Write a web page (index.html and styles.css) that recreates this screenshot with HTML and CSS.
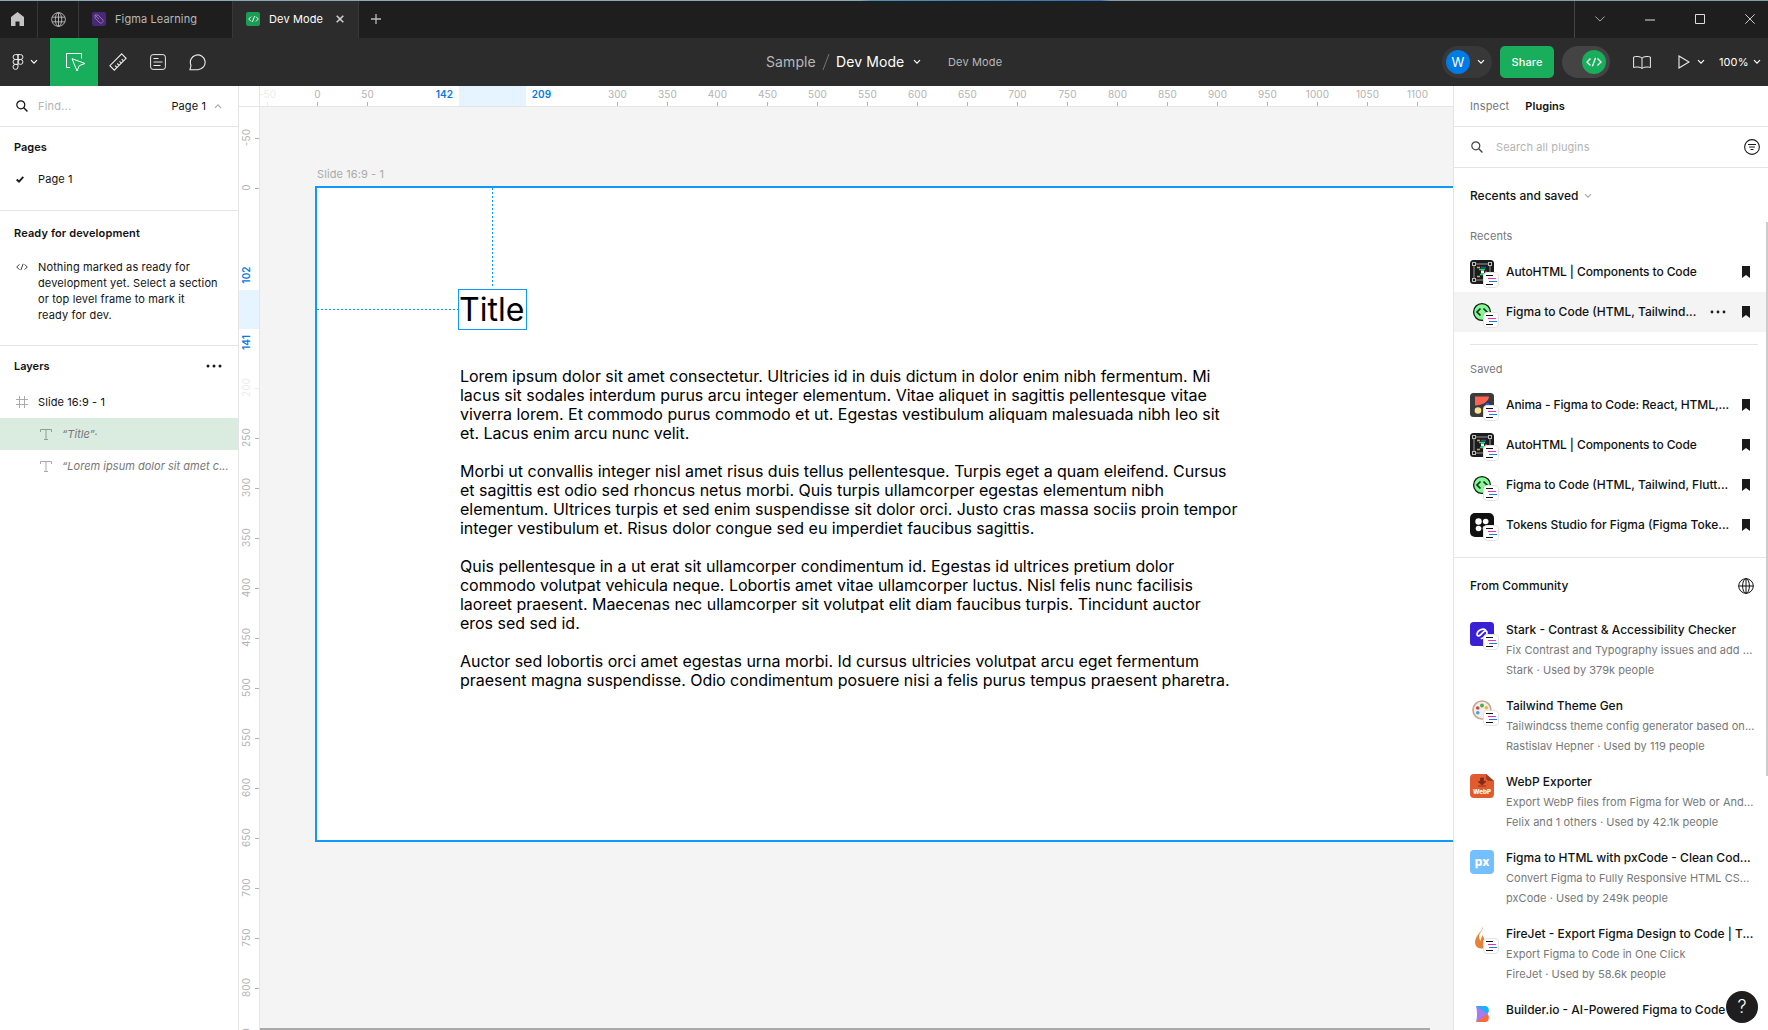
FILE: index.html
```html
<!DOCTYPE html>
<html lang="en">
<head>
<meta charset="utf-8">
<title>Dev Mode</title>
<link rel="stylesheet" href="styles.css">
</head>
<body>
<svg class="defs" width="0" height="0">
  <defs>
    <symbol id="down" viewBox="0 0 8 6"><path d="M1 1.2 4 4.2 7 1.2" fill="none" stroke="currentColor" stroke-width="1.2"/></symbol>
    <symbol id="search" viewBox="0 0 12 12"><circle cx="4.8" cy="4.8" r="4" fill="none" stroke="currentColor" stroke-width="1.2"/><path d="M7.8 7.8 11.4 11.4" stroke="currentColor" stroke-width="1.4"/></symbol>
    <symbol id="globe" viewBox="0 0 16 16"><g fill="none" stroke="currentColor"><circle cx="8" cy="8" r="7.3"/><ellipse cx="8" cy="8" rx="3.4" ry="7.3"/><path d="M1.3 5.5h13.4M1.3 10.5h13.4M8 .7v14.6"/></g></symbol>
    <symbol id="globe2" viewBox="0 0 16 16"><g fill="none" stroke="currentColor"><circle cx="8" cy="8" r="7.3"/><ellipse cx="8" cy="8" rx="3.4" ry="7.3"/><path d="M.7 8h14.6M8 .7v14.6"/></g></symbol>
    <symbol id="code" viewBox="0 0 16 10"><path d="M4.5 1.5 1 5l3.500 3.500M11.500 1.500 15 5l-3.500 3.500M9.600 .8 6.400 9.200" fill="none" stroke="currentColor" stroke-width="1.300"/></symbol>
    <symbol id="mark" viewBox="0 0 8 12"><path d="M0 0h8v12L4 9 0 12z" fill="#1a1a1a"/></symbol>
    <symbol id="badge" viewBox="0 0 16 16"><rect x=".5" y=".5" width="15" height="15" rx="3.500" fill="#fff" stroke="#e3e3e3"/><path d="M3 3.500h7M3 12.500h7" stroke="#111"/><path d="M5 6.500h8" stroke="#ff24bd"/><path d="M6 9.500h8" stroke="#0d7ff2"/></symbol>
    <symbol id="tt" viewBox="0 0 12 11"><path d="M.5 3V.5h11V3M6 .5v10M4 10.500h4" fill="none" stroke="currentColor"/></symbol>
    <symbol id="auto" viewBox="0 0 24 24"><rect width="24" height="24" rx="3.500" fill="#1c1c1e"/><rect x="4" y="4" width="16" height="16" fill="none" stroke="#999"/><g fill="#1c1c1e" stroke="#bbb"><rect x="2.500" y="2.500" width="3" height="3"/><rect x="18.500" y="2.500" width="3" height="3"/><rect x="2.500" y="18.500" width="3" height="3"/></g><path d="M7 7.500h3" stroke="#ff9d1c" stroke-width="1.600"/><path d="M11 7.500h5" stroke="#1d58a0" stroke-width="1.600"/><path d="M9 9.500h6M10 14.500h5" stroke="#1fd683" stroke-width="1.600"/><path d="M11 10.500h3v3h-3z" fill="#d6ffed"/><path d="M15 12h2" stroke="#f33" stroke-width="1.500"/><path d="M7 16.500h3" stroke="#ff9d1c" stroke-width="1.500"/></symbol>
    <symbol id="ftc" viewBox="0 0 24 24"><circle cx="12" cy="12" r="8.400" fill="#86f794" stroke="#0c1d10" stroke-width="1.300"/><path d="M10.500 8.500 7 12l3.500 3.500M13.500 8.500 17 12l-3.500 3.500" fill="none" stroke="#10351a" stroke-width="1.700"/></symbol>
  </defs>
</svg>
<div class="app">
  <header class="tabs">
    <div class="tab home"><svg width="13" height="14" viewBox="0 0 13 14"><path d="M6.500 0 13 5v9H8.500V9.500h-4V14H0V5z" fill="#c4c4c4"/></svg></div>
    <div class="tab world"><svg width="15" height="15"><use href="#globe"/></svg></div>
    <div class="tab learn">
      <svg width="14" height="14" viewBox="0 0 14 14"><rect width="14" height="14" rx="2" fill="#4a2878"/><path d="M3 3h3l5 5c1 1.500-1.500 4-3 3L3 6zM3 3l4 4" fill="none" stroke="#8d75a8"/></svg>
      <span>Figma Learning</span></div>
    <div class="tab current">
      <span class="devicon"><svg width="11" height="8"><use href="#code"/></svg></span><span>Dev Mode</span>
      <svg class="close" width="8" height="8" viewBox="0 0 8 8"><path d="M.7.7l6.600 6.600M7.300.7.700 7.300" stroke="#d0d0d0" stroke-width="1.600"/></svg></div>
    <div class="tab plus"><svg width="10" height="10" viewBox="0 0 10 10"><path d="M5 0v10M0 5h10" stroke="#bbb" stroke-width="1.300"/></svg></div>
    <div class="window">
      <svg width="10" height="6" viewBox="0 0 10 6"><path d="M.4.5 5 5.100 9.600.5" fill="none" stroke="#aaa"/></svg>
      <svg width="10" height="11" viewBox="0 0 10 11"><path d="M0 6h10" stroke="#ddd"/></svg>
      <svg width="10" height="10" viewBox="0 0 10 10"><path d="M.5.5h9v9h-9z" fill="none" stroke="#ddd"/></svg>
      <svg width="10" height="10" viewBox="0 0 10 10"><path d="M.3.300l9.400 9.400M9.700.300.300 9.700" stroke="#ccc"/></svg>
    </div>
  </header>
  <nav class="toolbar">
    <div class="tool logo"><svg width="12" height="16" viewBox="0 0 12 16"><path d="M6 .6H3.500a2.400 2.400 0 0 0 0 4.900H6zM6 .6h2.500a2.400 2.400 0 0 1 0 4.900H6zM6 5.500H3.500a2.400 2.400 0 0 0 0 4.900H6zM8.500 5.500a2.400 2.400 0 1 1 0 4.900 2.400 2.400 0 0 1 0-4.900M6 10.400H3.500A2.500 2.500 0 1 0 6 13z" fill="none" stroke="#eee"/></svg><svg width="8" height="6"><use href="#down"/></svg></div>
    <div class="tool active"><svg width="22" height="20" viewBox="0 0 22 20"><path d="M5 15.500H1.500V1.500h15v5" fill="none" stroke="#fff"/><path d="M7 6.700 20 11.500 14.300 13.600 12 19z" fill="none" stroke="#fff"/></svg></div>
    <div class="tool"><svg width="18" height="18" viewBox="0 0 18 18"><g fill="none" stroke="#eee" stroke-width="1.100"><path d="M12.700.9 17.100 5.300 5.300 17.100.9 12.700z"/><path d="M14.500 7.900l-1.800-1.800M12.300 10.100l-1.800-1.800M10.100 12.300l-1.800-1.800M7.900 14.500l-1.800-1.800"/></g></svg></div>
    <div class="tool"><svg width="16" height="16" viewBox="0 0 16 16"><g fill="none" stroke="#eee"><rect x=".6" y=".6" width="14.800" height="14.800" rx="2.500"/><path d="M3.500 4.500h5M3.500 11.500h7"/></g><path d="M3.500 8h9" stroke="#bbb" stroke-width="1.300"/></svg></div>
    <div class="tool"><svg width="18" height="17" viewBox="0 0 18 17"><path d="M1 15.700l1-4.300a7.400 7.400 0 1 1 7 4.300z" fill="none" stroke="#eee" stroke-width="1.100"/></svg></div>
    <div class="crumbs"><span class="proj">Sample</span><svg width="8" height="16" viewBox="0 0 8 16"><path d="M7 0 1 16" stroke="#777"/></svg><span class="file">Dev Mode</span><svg width="8" height="6"><use href="#down"/></svg><span class="branch">Dev Mode</span></div>
    <div class="actions">
      <div class="user"><span class="avatar">W</span><svg width="8" height="6"><use href="#down"/></svg></div>
      <div class="share">Share</div>
      <div class="switch"><span><svg width="16" height="10"><use href="#code"/></svg></span></div>
      <svg class="book" width="18" height="13" viewBox="0 0 18 13"><path d="M9 2C7 .2 3 .2.600 1v10.500C3 10.700 7 10.700 9 12.400c2-1.700 6-1.700 8.400-.9V1C15 .2 11 .2 9 2v10.400" fill="none" stroke="#eee"/></svg>
      <svg class="play" width="12" height="14" viewBox="0 0 12 14"><path d="M1 1 11 7 1 13z" fill="none" stroke="#eee" stroke-width="1.100"/></svg>
      <svg class="c1" width="8" height="6"><use href="#down"/></svg>
      <span class="zoom">100%</span>
      <svg width="8" height="6"><use href="#down"/></svg>
    </div>
  </nav>
  <main class="work">
    <aside class="left">
      <div class="find"><svg width="12" height="12"><use href="#search"/></svg><span class="hint">Find...</span><span class="pagesel">Page 1</span><svg class="up" width="8" height="6"><use href="#down"/></svg></div>
      <section class="pages"><h3>Pages</h3><div class="row"><svg width="8" height="7" viewBox="0 0 8 7"><path d="M.7 3.500 3 5.700 7.300.9" fill="none" stroke="#1a1a1a" stroke-width="1.800"/></svg><span>Page 1</span></div></section>
      <section class="ready"><h3>Ready for development</h3><div class="note"><svg width="12" height="8"><use href="#code"/></svg><p>Nothing marked as ready for<br>development yet. Select a section<br>or top level frame to mark it<br>ready for dev.</p></div></section>
      <section class="layers">
        <div class="lhead"><h3>Layers</h3><svg width="16" height="4" viewBox="0 0 16 4"><g fill="#1a1a1a"><circle cx="2" cy="2" r="1.500"/><circle cx="8" cy="2" r="1.500"/><circle cx="14" cy="2" r="1.500"/></g></svg></div>
        <div class="layer frame"><svg width="12" height="12" viewBox="0 0 12 12"><path d="M3.500 0v12M8.500 0v12M0 3.500h12M0 8.500h12" stroke="#aaa"/></svg><span>Slide 16:9 - 1</span></div>
        <div class="layer text sel"><svg width="12" height="11"><use href="#tt"/></svg><i>“Title”·</i></div>
        <div class="layer text"><svg width="12" height="11"><use href="#tt"/></svg><i>“Lorem ipsum dolor sit amet c...</i></div>
      </section>
    </aside>
    <div class="canvas">
      <svg class="rulers" width="1215" height="944" viewBox="239 86 1215 944"></svg>
      <div class="stage">
        <span class="framename">Slide 16:9 - 1</span>
        <div class="slide"></div>
        <svg class="guides" width="215" height="150" viewBox="315 186 215 150"><path d="M492.500 188v100M317 309.500h141" stroke="#0d99ff" stroke-dasharray="2 2"/></svg>
        <div class="title">Title</div>
        <div class="copy">
          <p><span>Lorem ipsum dolor sit amet consectetur. Ultricies id in duis dictum in dolor enim nibh fermentum. Mi</span><span>lacus sit sodales interdum purus arcu integer elementum. Vitae aliquet in sagittis pellentesque vitae</span><span>viverra lorem. Et commodo purus commodo et ut. Egestas vestibulum aliquam malesuada nibh leo sit</span><span>et. Lacus enim arcu nunc velit.</span></p>
          <p><span>Morbi ut convallis integer nisl amet risus duis tellus pellentesque. Turpis eget a quam eleifend. Cursus</span><span>et sagittis est odio sed rhoncus netus morbi. Quis turpis ullamcorper egestas elementum nibh</span><span>elementum. Ultrices turpis et sed enim suspendisse sit dolor orci. Justo cras massa sociis proin tempor</span><span>integer vestibulum et. Risus dolor congue sed eu imperdiet faucibus sagittis.</span></p>
          <p><span>Quis pellentesque in a ut erat sit ullamcorper condimentum id. Egestas id ultrices pretium dolor</span><span>commodo volutpat vehicula neque. Lobortis amet vitae ullamcorper luctus. Nisl felis nunc facilisis</span><span>laoreet praesent. Maecenas nec ullamcorper sit volutpat elit diam faucibus turpis. Tincidunt auctor</span><span>eros sed sed id.</span></p>
          <p><span>Auctor sed lobortis orci amet egestas urna morbi. Id cursus ultricies volutpat arcu eget fermentum</span><span>praesent magna suspendisse. Odio condimentum posuere nisi a felis purus tempus praesent pharetra.</span></p>
        </div>
        <div class="hscroll"></div>
      </div>
    </div>
    <aside class="right">
      <div class="ptabs"><span>Inspect</span><b>Plugins</b></div>
      <div class="psearch"><svg width="12" height="12"><use href="#search"/></svg><span>Search all plugins</span><svg class="filter" width="16" height="16" viewBox="0 0 16 16"><circle cx="8" cy="8" r="7.400" fill="none" stroke="#1a1a1a" stroke-width="1.100"/><path d="M4 5.500h8M6.500 10.500h3M5 8h6" stroke="#1a1a1a"/></svg></div>
      <div class="plist">
        <div class="group">Recents and saved <svg width="8" height="6"><use href="#down"/></svg></div>
        <div class="sub first">Recents</div>
        <div class="plugin"><div class="pic"><svg width="24" height="24"><use href="#auto"/></svg><svg class="bdg" width="16" height="16"><use href="#badge"/></svg></div><span class="tight">AutoHTML | Components to Code</span><svg class="bm" width="8" height="12"><use href="#mark"/></svg></div>
        <div class="plugin hover"><div class="pic"><svg width="24" height="24"><use href="#ftc"/></svg><svg class="bdg" width="16" height="16"><use href="#badge"/></svg></div><span>Figma to Code (HTML, Tailwind...</span><svg class="more" width="16" height="4" viewBox="0 0 16 4"><g fill="#1a1a1a"><circle cx="2" cy="2" r="1.400"/><circle cx="8" cy="2" r="1.400"/><circle cx="14" cy="2" r="1.400"/></g></svg><svg class="bm" width="8" height="12"><use href="#mark"/></svg></div>
        <div class="rule"></div>
        <div class="sub saved">Saved</div>
        <div class="plugin"><div class="pic"><svg width="24" height="24" viewBox="0 0 24 24"><rect width="24" height="24" rx="3.500" fill="#3b3b3b"/><path d="M5 3.500h14c0 5-7 9-14 9z" fill="#ff6250"/><circle cx="8" cy="17.500" r="3.300" fill="#ffdf90"/><circle cx="17.500" cy="12" r="2" fill="#2b5cff"/></svg><svg class="bdg" width="16" height="16"><use href="#badge"/></svg></div><span class="tight">Anima - Figma to Code: React, HTML,...</span><svg class="bm" width="8" height="12"><use href="#mark"/></svg></div>
        <div class="plugin"><div class="pic"><svg width="24" height="24"><use href="#auto"/></svg><svg class="bdg" width="16" height="16"><use href="#badge"/></svg></div><span class="tight">AutoHTML | Components to Code</span><svg class="bm" width="8" height="12"><use href="#mark"/></svg></div>
        <div class="plugin"><div class="pic"><svg width="24" height="24"><use href="#ftc"/></svg><svg class="bdg" width="16" height="16"><use href="#badge"/></svg></div><span>Figma to Code (HTML, Tailwind, Flutt...</span><svg class="bm" width="8" height="12"><use href="#mark"/></svg></div>
        <div class="plugin"><div class="pic"><svg width="24" height="24" viewBox="0 0 24 24"><rect width="24" height="24" rx="5" fill="#111"/><g fill="#fff"><circle cx="8.500" cy="8.500" r="3.200"/><circle cx="15.700" cy="8.500" r="2.800"/><circle cx="8.500" cy="15.500" r="2.800"/><circle cx="15.500" cy="15.500" r="2.800"/></g></svg><svg class="bdg" width="16" height="16"><use href="#badge"/></svg></div><span>Tokens Studio for Figma (Figma Toke...</span><svg class="bm" width="8" height="12"><use href="#mark"/></svg></div>
        <div class="community"><span>From Community</span><svg width="16" height="16"><use href="#globe2"/></svg></div>
        <div class="card"><div class="pic"><svg width="24" height="24" viewBox="0 0 24 24"><rect width="24" height="24" rx="3.500" fill="#3a20d5"/><path d="M15.500 8c-2.500-2.500-8 .5-8.500 4-.2 2 2 2.500 3.200 1.200l3.600-3.600c1.500-1.300 3.500-.5 3.200 1.400-.5 3-3 5-5.500 5.500" fill="none" stroke="#fff" stroke-width="1.700" stroke-linecap="round"/></svg><svg class="bdg" width="16" height="16"><use href="#badge"/></svg></div><div class="info"><h4>Stark - Contrast &amp; Accessibility Checker</h4><p>Fix Contrast and Typography issues and add ...</p><p>Stark · Used by 379k people</p></div></div>
        <div class="card"><div class="pic"><svg width="24" height="24" viewBox="0 0 24 24"><circle cx="12" cy="12" r="9" fill="#f3efec" stroke="#c5a98d" stroke-width="1.700"/><circle cx="12" cy="7.500" r="1.900" fill="#42ad52"/><circle cx="7.700" cy="10" r="1.800" fill="#d9423f"/><circle cx="16.300" cy="9.800" r="1.800" fill="#f4b62c"/><circle cx="7.800" cy="14.700" r="1.800" fill="#39a5e2"/></svg><svg class="bdg" width="16" height="16"><use href="#badge"/></svg></div><div class="info"><h4>Tailwind Theme Gen</h4><p>Tailwindcss theme config generator based on...</p><p>Rastislav Hepner · Used by 119 people</p></div></div>
        <div class="card"><div class="pic"><svg width="24" height="24" viewBox="0 0 24 24"><path d="M4 0h12l8 7v13a4 4 0 0 1-4 4H4a4 4 0 0 1-4-4V4a4 4 0 0 1 4-4" fill="#e25b2e"/><path d="M16 0v3q0 4 4 4h4z" fill="#9e3d22"/><path d="M10.500 4h3v3.500H16L12 11 8 7.500h2.500zM8 12h8" fill="#7e2c19" stroke="#7e2c19" stroke-width=".8"/><text x="12" y="19.800" text-anchor="middle" textLength="18" lengthAdjust="spacingAndGlyphs" class="webp">WebP</text></svg></div><div class="info"><h4>WebP Exporter</h4><p>Export WebP files from Figma for Web or And...</p><p>Felix and 1 others · Used by 42.1k people</p></div></div>
        <div class="card"><div class="pic"><svg width="24" height="24" viewBox="0 0 24 24"><rect width="24" height="24" rx="4" fill="#74bfff"/><text x="12" y="15.500" text-anchor="middle" class="px">px</text></svg></div><div class="info"><h4>Figma to HTML with pxCode - Clean Cod...</h4><p>Convert Figma to Fully Responsive HTML CS...</p><p>pxCode · Used by 249k people</p></div></div>
        <div class="card"><div class="pic"><svg width="24" height="24" viewBox="0 0 24 24"><path d="M12.500 0c1.500 4-3.500 6.500-3.500 10.500 0 2 1 3 1.300 4.500 1-1.500.7-3.500 2.500-6 .2 3 3.200 5 3.200 8.500 0 3-2 5-5 5-4 0-6-3-6-6.500 0-3 2-4.500 2-7 1 1 .8 2 .8 2C7 7 13 5.500 12.500 0" fill="#e8813a"/></svg><svg class="bdg" width="16" height="16"><use href="#badge"/></svg></div><div class="info"><h4>FireJet - Export Figma Design to Code | T...</h4><p>Export Figma to Code in One Click</p><p>FireJet · Used by 58.6k people</p></div></div>
        <div class="card"><div class="pic"><svg width="24" height="24" viewBox="0 0 24 24"><path d="M6 4h9c4 0 5 5 2.500 8H14z" fill="#1cb0f6"/><path d="M6 20h9c4 0 5-5 2.500-8H14z" fill="#ff6a3d"/><path d="M6 4l11.500 8L6 20q2-8 0-16" fill="#a47bf2"/></svg></div><div class="info"><h4>Builder.io - AI-Powered Figma to Code</h4></div></div>
      </div>
      <div class="vscroll"></div>
      <div class="help">?</div>
    </aside>
  </main>
</div>
<script src="rulers.js"></script>
</body>
</html>
```
FILE: styles.css
```css
* { box-sizing: border-box; }
body { margin: 0; overflow: hidden; font: 11px/16px Inter, "Liberation Sans", sans-serif; color: #111; }
h3, h4, p { margin: 0; font-size: 11px; white-space: nowrap; }
svg { display: block; flex: none; }
.defs { position: absolute; }
.app { width: 1768px; height: 1030px; display: flex; flex-direction: column; overflow: hidden; background: #fff; }

.tabs { height: 38px; flex: none; display: flex; background: #1e1e1e; border-top: 1px solid; border-image: linear-gradient(90deg, #8aa9b8 0 860px, #4c94b4 870px, #3474b8 1100px, #7f9dab 1110px) 1; color: #b8b8b8; font-size: 11px; letter-spacing: .12px; white-space: nowrap; }
.tab { display: flex; align-items: center; border-right: 1px solid #383838; padding-bottom: 1px; }
.home { width: 38px; padding-left: 11px; }
.world { width: 41px; padding-left: 13px; }
.learn { width: 154px; padding-left: 13px; gap: 9px; }
.current { width: 126px; padding-left: 13px; gap: 9px; background: #2c2c2c; color: #fff; }
.devicon { width: 14px; height: 14px; border-radius: 2px; background: #1a9c55; display: grid; place-items: center; }
.close { margin-left: 4px; }
.plus { border: 0; padding-left: 12px; }
.window { width: 194px; margin-left: auto; border-left: 1px solid #444; padding: 0 0 1px 20px; display: flex; align-items: center; gap: 40px; }

.toolbar { height: 48px; flex: none; background: #2c2c2c; display: flex; align-items: center; color: #fff; }
.tool { width: 40px; height: 48px; display: flex; align-items: center; justify-content: center; }
.logo { width: 50px; gap: 6px; justify-content: flex-start; padding-left: 12px; }
.active { width: 48px; background: #18ae5c; padding-left: 3px; }
.crumbs { display: flex; align-items: center; margin-left: 548px; font-size: 14px; letter-spacing: .1px; white-space: nowrap; }
.proj { width: 56px; color: #b8b8b8; }
.file { margin-left: 6px; width: 77px; }
.branch { margin-left: 27px; color: #b8b8b8; font-size: 11px; letter-spacing: .15px; }
.actions { margin-left: auto; display: flex; align-items: center; padding-right: 7px; }
.user { width: 50px; height: 32px; border-radius: 16px; background: #383838; display: flex; align-items: center; gap: 7px; padding-left: 4px; }
.avatar { width: 24px; height: 24px; border-radius: 50%; background: #007be5; display: grid; place-items: center; font-size: 13px; }
.share { width: 54px; height: 32px; border-radius: 5px; background: #18ae5c; margin-left: 8px; display: grid; place-items: center; font-weight: 500; letter-spacing: .1px; }
.switch { width: 48px; height: 32px; border-radius: 16px; background: #444; margin-left: 8px; padding: 4px; display: flex; justify-content: flex-end; }
.switch span { width: 24px; height: 24px; border-radius: 50%; background: #18ae5c; display: grid; place-items: center; }
.book { margin-left: 23px; }
.play { margin-left: 27px; }
.c1 { margin: 0 14px 0 7px; }
.zoom { width: 34px; letter-spacing: .1px; }

.work { flex: 1; min-height: 0; display: flex; }
.left { width: 239px; border-right: 1px solid #e5e5e5; flex: none; }
.left h3 { font-weight: 600; }
.find { height: 41px; border-bottom: 1px solid #e5e5e5; display: flex; align-items: center; padding: 0 16px; }
.hint { margin-left: 10px; color: #b3b3b3; letter-spacing: .2px; }
.pagesel { margin-left: auto; letter-spacing: .1px; }
.up { transform: rotate(180deg); color: #aaa; margin-left: 8px; }
.pages { height: 84px; padding: 12px 14px; border-bottom: 1px solid #e5e5e5; }
.row { display: flex; align-items: center; margin-top: 16px; padding-left: 2px; gap: 14px; letter-spacing: .1px; }
.ready { height: 135px; padding: 14px; border-bottom: 1px solid #e5e5e5; }
.ready h3 { letter-spacing: .12px; }
.note { display: flex; margin-top: 18px; gap: 10px; padding-left: 2px; letter-spacing: .13px; }
.note svg { margin-top: 4px; color: #333; }
.lhead { height: 40px; display: flex; align-items: center; justify-content: space-between; padding: 0 16px 0 14px; }
.layer { height: 32px; display: flex; align-items: center; gap: 10px; padding-left: 16px; white-space: nowrap; letter-spacing: .1px; }
.layer.text { padding-left: 40px; color: #aaa; letter-spacing: .03px; }
.layer i { color: #777; }
.layer.sel { background: #daebe0; color: #8aa091; }

.canvas { flex: 1; min-width: 0; position: relative; background: #f4f4f4; overflow: hidden; }
.rulers { position: absolute; left: 0; top: 0; }
.rulers text { font-size: 10px; fill: #b3b3b3; letter-spacing: .1px; }
.rulers .blue { fill: #007be5; font-weight: 600; }
.rulers .faint { opacity: .25; }
.stage { position: absolute; inset: 21px 0 0 21px; overflow: hidden; }
.framename { position: absolute; left: 57px; top: 59px; color: #aaa; letter-spacing: .1px; }
.slide { position: absolute; left: 55px; top: 79px; width: 1168px; height: 656px; border: 2px solid #0d99ff; background: #fff; }
.guides { position: absolute; left: 55px; top: 79px; }
.title { position: absolute; left: 198px; top: 182px; width: 69px; height: 41px; border: 1px solid #0d99ff; font-size: 32px; line-height: 39px; color: #000; }
.copy { position: absolute; left: 200px; top: 260px; font-size: 16px; line-height: 19px; letter-spacing: -.02px; color: #000; white-space: nowrap; }
.copy p { font-size: 16px; margin-bottom: 19px; }
.copy span { display: block; }
.hscroll { position: absolute; left: 0; bottom: 0; width: 1170px; height: 2px; background: #aaa; }

.right { width: 315px; flex: none; border-left: 1px solid #e5e5e5; position: relative; overflow: hidden; }
.ptabs { height: 41px; border-bottom: 1px solid #e5e5e5; padding-left: 16px; display: flex; align-items: center; gap: 16px; color: #777; letter-spacing: .15px; }
.ptabs b { color: #111; font-weight: 600; letter-spacing: .05px; }
.psearch { height: 41px; border-bottom: 1px solid #e5e5e5; display: flex; align-items: center; padding: 0 8px 0 17px; color: #444; }
.psearch span { color: #b3b3b3; margin-left: 13px; letter-spacing: .1px; }
.filter { margin-left: auto; }
.group { margin: 20px 0 0 16px; display: flex; align-items: center; gap: 6px; font-weight: 500; font-size: 12px; }
.group svg { color: #aaa; }
.sub { padding-left: 16px; color: #777; letter-spacing: .1px; }
.first { margin: 24px 0 8px; }
.plugin { height: 40px; display: flex; align-items: center; padding: 0 18px 0 16px; font-size: 12px; font-weight: 500; white-space: nowrap; }
.plugin > span { margin-left: 12px; }
.plugin > .tight { letter-spacing: -.09px; }
.pic { width: 24px; height: 24px; position: relative; flex: none; }
.bdg { position: absolute; left: 13px; top: 12px; }
.bm { margin-left: auto; }
.hover { background: #f4f4f4; }
.more { margin-left: auto; }
.more + .bm { margin-left: 16px; }
.rule { height: 1px; background: #e5e5e5; margin: 12px 10px 0 16px; }
.saved { margin: 16px 0 8px; }
.community { height: 56px; border-top: 1px solid #e5e5e5; margin-top: 12px; padding: 0 14px 0 16px; display: flex; align-items: center; justify-content: space-between; font-size: 12px; font-weight: 500; }
.card { height: 76px; padding: 9px 0 0 16px; display: flex; gap: 12px; }
.info h4 { font-size: 12px; font-weight: 500; line-height: 16px; }
.info p { color: #777; line-height: 20px; letter-spacing: .04px; }
.info h4 + p { margin-top: 2px; }
.webp { font: 800 6px Inter, sans-serif; fill: #fff; }
.px { font: 800 12px Inter, sans-serif; fill: #fff; }
.vscroll { position: absolute; right: 0; top: 136px; width: 2px; height: 554px; background: #ccc; }
.help { position: absolute; right: 10px; bottom: 7px; width: 32px; height: 32px; border-radius: 50%; background: #1e1e1e; color: #fff; display: grid; place-items: center; font-size: 18px; font-weight: 300; }
```
FILE: rulers.js
```js
const ruler = document.querySelector('.rulers');
let out = '<path fill="#fff" d="M239 86h1215v20H239zM239 86h20v944h-20z"/>' +
  '<path fill="#e5f4ff" d="M459 86h67v20h-67zM239 290h20v39h-20z"/>' +
  '<path stroke="#e5e5e5" d="M239 106.500h1215M259.500 86v944"/>';
for (let v = -50; v <= 1100; v += 50) {
  // labels beside the selected range give way to its blue bounds
  if (v >= 100 && v <= 250) continue;
  const x = 317.5 + v;
  const faint = v === -50 ? ' class="faint"' : '';
  out += `<g${faint}><path stroke="#b3b3b3" d="M${x} 102v4"/><text x="${x}" y="97.500" text-anchor="middle">${v}</text></g>`;
}
for (let v = -50; v <= 850; v += 50) {
  if (v >= 50 && v <= 150) continue;
  const y = 188.5 + v;
  const faint = v === 200 ? ' class="faint"' : '';
  out += `<g${faint}><path stroke="#b3b3b3" d="M255 ${y}h4"/><text transform="translate(250 ${y - 1}) rotate(-90)" text-anchor="middle">${v}</text></g>`;
}
out += '<text class="blue" x="444.500" y="97.500" text-anchor="middle">142</text><text class="blue" x="541.500" y="97.500" text-anchor="middle">209</text>' +
  '<text class="blue" transform="translate(250 275) rotate(-90)" text-anchor="middle">102</text>' +
  '<text class="blue" transform="translate(250 342.500) rotate(-90)" text-anchor="middle">141</text>';
ruler.innerHTML = out;
```
